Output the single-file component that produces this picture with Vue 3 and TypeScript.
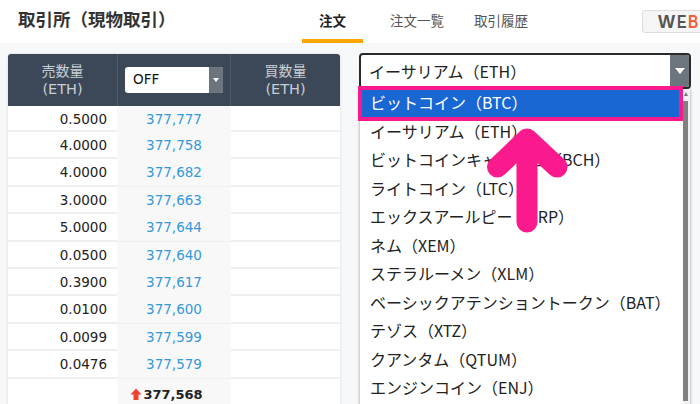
<script setup lang="ts">
const tabs = [
  { label: '注文', active: true },
  { label: '注文一覧', active: false },
  { label: '取引履歴', active: false },
]
const rows = [
  ['0.5000', '377,777'],
  ['4.0000', '377,758'],
  ['4.0000', '377,682'],
  ['3.0000', '377,663'],
  ['5.0000', '377,644'],
  ['0.0500', '377,640'],
  ['0.3900', '377,617'],
  ['0.0100', '377,600'],
  ['0.0099', '377,599'],
  ['0.0476', '377,579'],
]
const coins = [
  'ビットコイン（BTC）',
  'イーサリアム（ETH）',
  'ビットコインキャッシュ（BCH）',
  'ライトコイン（LTC）',
  'エックスアールピー（XRP）',
  'ネム（XEM）',
  'ステラルーメン（XLM）',
  'ベーシックアテンショントークン（BAT）',
  'テゾス（XTZ）',
  'クアンタム（QTUM）',
  'エンジンコイン（ENJ）',
]
</script>

<template>
  <div class="page">
    <header class="top">
      <h1 class="title">取引所（現物取引）</h1>
      <nav class="tabs">
        <span v-for="t in tabs" :key="t.label" class="tab" :class="{ on: t.active }">{{ t.label }}</span>
      </nav>
      <div class="logo"><b class="w">W</b><b class="e">E</b><b class="e orange">B</b></div>
    </header>
    <main class="body">
      <section class="book">
        <div class="head">
          <div class="hcell">売数量<br /><span class="unit">(ETH)</span></div>
          <div class="hcell mid">
            <div class="mini">
              <span class="mini-text">OFF</span>
              <span class="mini-btn"><i class="tri small"></i></span>
            </div>
          </div>
          <div class="hcell">買数量<br /><span class="unit">(ETH)</span></div>
        </div>
        <div v-for="r in rows" :key="r[1]" class="row">
          <div class="qty">{{ r[0] }}</div>
          <div class="price">{{ r[1] }}</div>
          <div></div>
        </div>
        <div class="row last">
          <div></div>
          <div class="price cur">
            <svg class="up" width="12" height="12" viewBox="0 0 12 12"><path d="M6 .5 11.5 6.5H8.5V12H3.5V6.5H.5Z" fill="#f0402f" /></svg>377,568
          </div>
          <div></div>
        </div>
      </section>
      <section class="picker">
        <div class="select">
          <span class="select-text">イーサリアム（ETH）</span>
          <span class="select-btn"><i class="tri"></i></span>
        </div>
        <div class="menu">
          <div class="list">
            <div v-for="(c, i) in coins" :key="c" class="opt" :class="{ sel: i === 0 }">{{ c }}</div>
          </div>
          <div class="bar"><i class="tri-up"></i><i class="thumb"></i></div>
        </div>
        <div class="mark"></div>
        <svg class="arrow" width="95" height="120" viewBox="0 0 95 120">
          <path d="M47 102V19M17.5 47 47 19 77 47" fill="none" stroke="#fb1a8e" stroke-width="21" stroke-linecap="round" stroke-linejoin="round" />
        </svg>
      </section>
    </main>
  </div>
</template>

<style>
html, body { margin: 0; overflow: hidden; }
</style>

<style scoped>
.page {
  width: 700px;
  height: 404px;
  overflow: hidden;
  background: #f7f8fa;
  font-family: "DejaVu Sans", "Noto Sans CJK JP", sans-serif;
  color: #222;
}
.top {
  height: 43px;
  background: #fff;
  display: flex;
  position: relative;
}
.title {
  margin: 0;
  padding: 7px 0 0 18px;
  width: 302px;
  flex: none;
  box-sizing: border-box;
  font-size: 17.5px;
  line-height: 24px;
  font-weight: 700;
  font-family: "Noto Sans CJK JP", sans-serif;
  color: #333;
}
.tabs { display: flex; }
.tab {
  width: 56px;
  height: 43px;
  box-sizing: border-box;
  padding-top: 10px;
  text-align: center;
  font-size: 13.5px;
  line-height: 20px;
  font-family: "Noto Sans CJK JP", sans-serif;
  color: #555;
  margin-left: 28px;
}
.tab:nth-child(2) { margin-left: 26px; }
.tab.on {
  width: 61px;
  margin-left: 0;
  color: #222;
  font-weight: 700;
  border-bottom: 4px solid #ffa500;
}
.logo {
  position: absolute;
  left: 642px;
  top: 10px;
  width: 80px;
  height: 23px;
  box-sizing: border-box;
  border: 1px solid #ddd;
  border-radius: 3px;
  background: #f5f5f5;
  padding-left: 15px;
  display: flex;
  font-family: "Liberation Sans", sans-serif;
  font-size: 19px;
  line-height: 21px;
  color: #555;
}
.w { width: 19px; transform: scaleX(0.95); transform-origin: left; }
.e { width: 11px; transform: scaleX(0.75); transform-origin: left; }
.orange { color: #f0623a; }
.body {
  display: flex;
  padding: 11px 0 0 8px;
}
.book {
  width: 332px;
  flex: none;
  background: #fff;
  box-shadow: 0 0 3px rgba(0, 0, 0, 0.12);
  border-radius: 3px 3px 0 0;
  height: 360px;
}
.head {
  display: grid;
  grid-template-columns: 109px 114px 109px;
  height: 52px;
  background: #3c4858;
  border-radius: 3px 3px 0 0;
}
.hcell {
  text-align: center;
  color: #c9ced4;
  font-size: 14px;
  line-height: 18px;
  padding-top: 8px;
}
.unit { font-size: 14.5px; }
.mid {
  border-left: 1px solid #4f5a69;
  border-right: 1px solid #4f5a69;
  padding: 13px 7px 0 7px;
}
.mini {
  height: 26px;
  width: 98px;
  background: #fff;
  border-radius: 3px;
  display: flex;
  justify-content: space-between;
  overflow: hidden;
}
.mini-text {
  color: #111;
  font-size: 13.5px;
  line-height: 25px;
  padding-left: 8px;
}
.mini-btn {
  width: 14px;
  background: #6c757d;
  display: flex;
  align-items: center;
  justify-content: center;
}
.tri {
  display: block;
  border-left: 5px solid transparent;
  border-right: 5px solid transparent;
  border-top: 6px solid #fff;
}
.tri.small {
  border-left-width: 3px;
  border-right-width: 3px;
  border-top-width: 4px;
}
.row {
  display: grid;
  grid-template-columns: 109px 114px 109px;
  height: 27.4px;
  box-sizing: border-box;
  border-bottom: 2px solid #efefef;
  font-size: 13.5px;
  line-height: 27px;
}
.head + .row {
  height: 26px;
  line-height: 26px;
}
.qty {
  text-align: right;
  padding-right: 10px;
  color: #222;
}
.price {
  text-align: center;
  background: #f8f8f8;
  color: #3498db;
}
.row.last { height: 30px; border-bottom: 0; }
.cur {
  color: #222;
  font-size: 13px;
  font-weight: 700;
  line-height: 27px;
  display: flex;
  align-items: center;
  justify-content: center;
  padding-right: 15px;
  padding-top: 1px;
  box-sizing: border-box;
}
.up { margin-right: 1px; }
.picker {
  position: relative;
  margin-left: 20px;
  width: 331px;
  flex: none;
}
.select {
  height: 36px;
  margin: -1px 0 0 -1px;
  box-sizing: border-box;
  border: 2px solid #2a2a2a;
  border-radius: 4px;
  background: #fff;
  display: flex;
  justify-content: space-between;
  overflow: hidden;
}
.select-text {
  font-size: 16px;
  line-height: 32px;
  padding-left: 8px;
  font-family: "Noto Sans CJK JP", sans-serif;
}
.select-btn {
  width: 19px;
  background: #6c757d;
  display: flex;
  align-items: center;
  justify-content: center;
}
.menu {
  display: flex;
  height: 320px;
  margin-right: 1px;
  background: #fff;
  box-shadow: 0 0 3px rgba(0, 0, 0, 0.4);
}
.list { flex: 1; }
.opt {
  height: 28.5px;
  line-height: 26px;
  padding-left: 10px;
  font-size: 16px;
  font-family: "Noto Sans CJK JP", sans-serif;
  white-space: nowrap;
  color: #222;
}
.opt.sel {
  background: #1967d2;
  color: #fff;
}
.bar {
  width: 7px;
  background: #f1f1f1;
  padding-top: 3px;
  box-sizing: border-box;
}
.tri-up {
  display: block;
  width: 0;
  margin: 0 0 4px 0.5px;
  border-left: 2.5px solid transparent;
  border-right: 2.5px solid transparent;
  border-bottom: 4px solid #777;
}
.thumb {
  display: block;
  width: 5px;
  margin-top: 5px;
  height: 300px;
  background: #808080;
}
.mark {
  position: absolute;
  left: -2px;
  top: 32px;
  width: 325px;
  height: 35px;
  box-sizing: border-box;
  border: 4px solid #fb1a8e;
}
.arrow {
  position: absolute;
  left: 120px;
  top: 66px;
}
</style>
